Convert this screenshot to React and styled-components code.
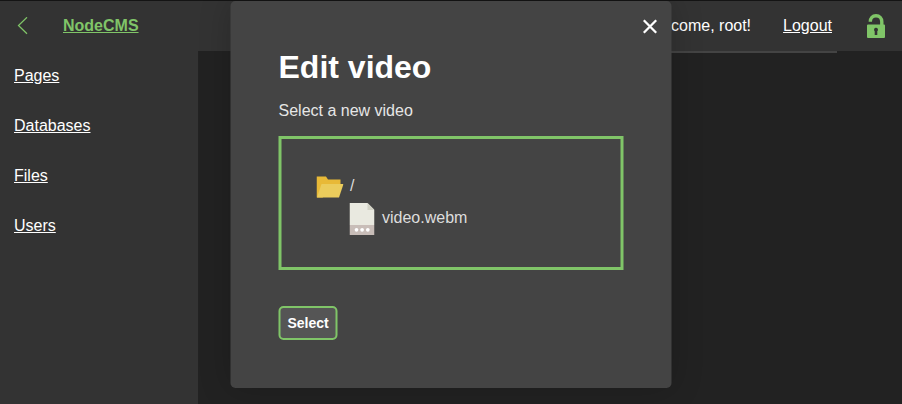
import React from "react";
import styled, { createGlobalStyle } from "styled-components";

const GlobalStyle = createGlobalStyle`
  *, *::before, *::after { box-sizing: border-box; }
  body {
    margin: 0;
    background: #222;
    color: #fff;
    font: 16px/18px "Liberation Sans", Arial, sans-serif;
    overflow: hidden;
  }
`;

const Page = styled.div`
  display: flex;
  flex-direction: column;
  height: 100vh;
  border-top: 1px solid #141414;
`;

const TopBar = styled.header`
  display: flex;
  align-items: center;
  flex: 0 0 50px;
  padding: 0 17px 0 17px;
  background: #333;
`;

const Brand = styled.a`
  margin-left: 34px;
  color: #80c568;
  font-weight: bold;
  text-decoration: underline;
`;

const Account = styled.div`
  display: flex;
  align-items: center;
  margin-left: auto;
`;

const Logout = styled.a`
  margin: 0 35px 0 32px;
  text-decoration: underline;
`;

const Body = styled.div`
  display: flex;
  flex: 1;
`;

const Sidebar = styled.nav`
  display: flex;
  flex-direction: column;
  gap: 32px;
  flex: 0 0 198px;
  padding: 16px 14px;
  background: #333;
`;

const NavLink = styled.a`
  align-self: flex-start;
  text-decoration: underline;
`;

const Main = styled.main`
  flex: 1;
  padding: 0 65px;
`;

const EditorEdge = styled.div`
  height: 2px;
  background: #444;
`;

const Modal = styled.section`
  position: absolute;
  top: 1px;
  left: 50%;
  width: 441px;
  height: 387px;
  padding: 48px;
  transform: translateX(-50%);
  border-radius: 5px;
  background: #444;
  box-shadow: 0 0 32px rgba(0, 0, 0, 0.2);
`;

const Close = styled.button`
  position: absolute;
  top: 18px;
  right: 14px;
  display: flex;
  padding: 0;
  border: 0;
  background: none;
`;

const Title = styled.h1`
  margin: 0;
  font-size: 32px;
  line-height: 36px;
`;

const Hint = styled.p`
  margin: 17px 0 16px;
  color: #e6e6e6;
`;

const Picker = styled.div`
  height: 134px;
  padding: 32px 34.5px;
  border: 3px solid #80c568;
  color: #ddd;
`;

const Entry = styled.div`
  display: flex;
  align-items: center;
  gap: ${(p) => (p.$nested ? 8 : 7)}px;
  height: 32px;
  padding-left: ${(p) => (p.$nested ? 33 : 0)}px;
`;

const EntryName = styled.span`
  padding-bottom: 2px;
`;

const SelectButton = styled.button`
  display: block;
  width: 59px;
  height: 34px;
  margin-top: 36px;
  padding: 0;
  border: 2px solid #80c568;
  border-radius: 5px;
  background: #555;
  color: #fff;
  font: bold 14px "Liberation Sans", Arial, sans-serif;
`;

const BackIcon = () => (
  <svg width="12" height="18" viewBox="0 0 12 18" fill="none">
    <path d="M10 .3 1.5 8.500 10 16.700" stroke="#80c568" strokeWidth="1.25" />
  </svg>
);

const LockIcon = () => (
  <svg width="18" height="24" viewBox="0 0 18 24">
    <path d="M3.300 7.800C3.300 4 5.500 1.800 9 1.800c3.500 0 5.800 2.400 5.800 6V12" fill="none" stroke="#80c568" strokeWidth="3.400" />
    <path
      fill="#80c568"
      fillRule="evenodd"
      d="M1 10.500h16a1 1 0 0 1 1 1V23a1 1 0 0 1-1 1H1a1 1 0 0 1-1-1V11.500a1 1 0 0 1 1-1ZM9 13.800a2 2 0 0 0-1.300 3.500V21h2.600v-3.700A2 2 0 0 0 9 13.800Z"
    />
  </svg>
);

const CloseIcon = () => (
  <svg width="15" height="15" viewBox="0 0 15 15">
    <path d="m1.300 1.300 12.400 12.400M13.700 1.300 1.300 13.700" stroke="#fff" strokeWidth="2.300" />
  </svg>
);

const FolderIcon = () => (
  <svg width="27" height="22" viewBox="0 0 27 22">
    <path d="M0 .5h9.500L11.500 3.500H24V10L6 21.500H0Z" fill="#e8b937" />
    <path d="M5 8h22l-4.500 13.500H.5Z" fill="#ebcc5c" />
  </svg>
);

const FileIcon = () => (
  <svg width="25" height="32" viewBox="0 0 25 32">
    <path d="M0 0h18l7 7v15H0Z" fill="#e9e9e0" />
    <path d="M18 0v7h7Z" fill="#d2d2c5" />
    <path d="M0 22h25v10H0Z" fill="#c8bdb8" />
    <circle cx="7" cy="26.800" r="1.850" fill="#fff" />
    <circle cx="12.600" cy="26.800" r="1.850" fill="#fff" />
    <circle cx="18.300" cy="26.800" r="1.850" fill="#fff" />
  </svg>
);

export default function App() {
  return (
    <>
      <GlobalStyle />
      <Page>
        <TopBar>
          <BackIcon />
          <Brand>NodeCMS</Brand>
          <Account>
            <span>Welcome, root!</span>
            <Logout>Logout</Logout>
            <LockIcon />
          </Account>
        </TopBar>
        <Body>
          <Sidebar>
            {["Pages", "Databases", "Files", "Users"].map((name) => (
              <NavLink key={name}>{name}</NavLink>
            ))}
          </Sidebar>
          <Main>
            <EditorEdge />
          </Main>
        </Body>
      </Page>
      <Modal>
        <Close aria-label="Close">
          <CloseIcon />
        </Close>
        <Title>Edit video</Title>
        <Hint>Select a new video</Hint>
        <Picker>
          <Entry>
            <FolderIcon />
            <EntryName>/</EntryName>
          </Entry>
          <Entry $nested>
            <FileIcon />
            <EntryName>video.webm</EntryName>
          </Entry>
        </Picker>
        <SelectButton>Select</SelectButton>
      </Modal>
    </>
  );
}
